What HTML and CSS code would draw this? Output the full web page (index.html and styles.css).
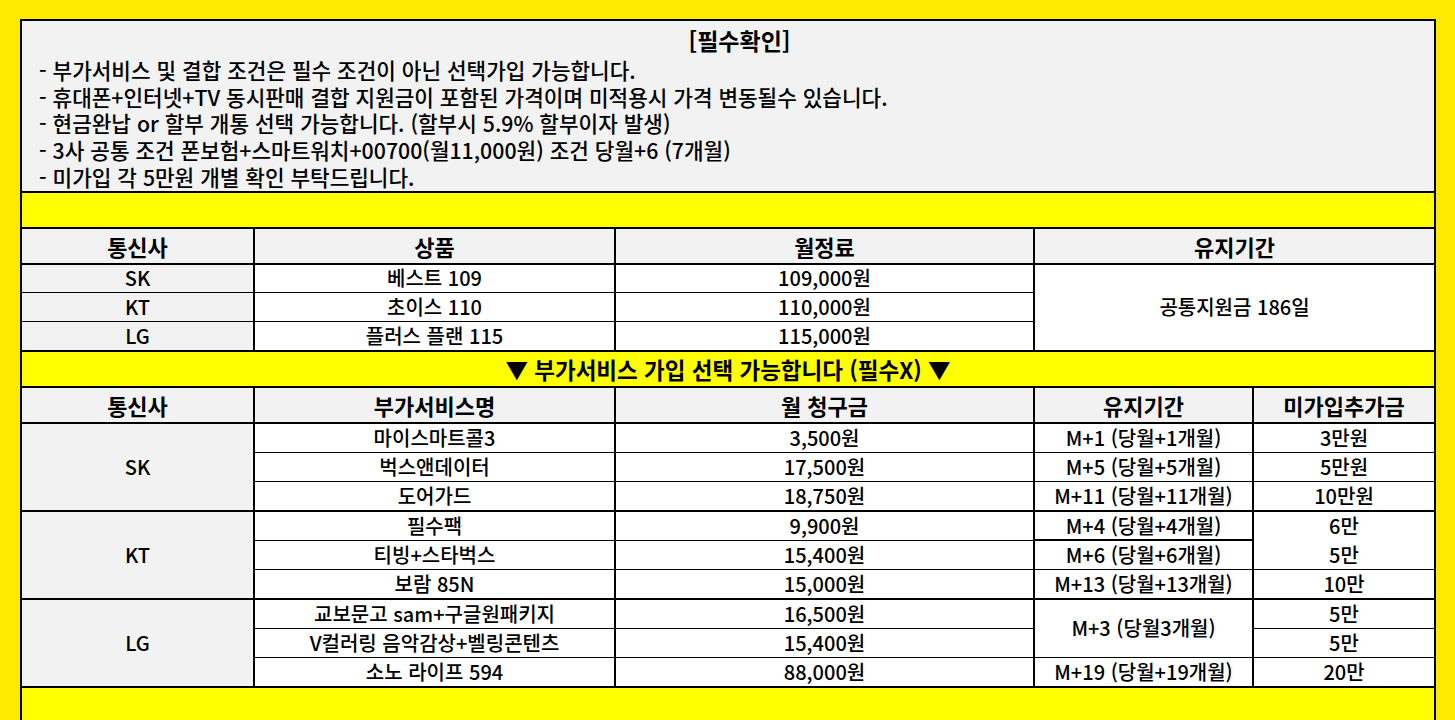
FILE: index.html
```html
<!DOCTYPE html>
<html lang="ko">
<head>
<meta charset="utf-8">
<title>요금 안내</title>
<link rel="stylesheet" href="styles.css">
</head>
<body>
<table class="sheet">
  <colgroup>
    <col class="c1"><col class="c2"><col class="c3"><col class="c4"><col class="c5">
  </colgroup>
  <tbody>
    <tr class="notice-row">
      <td colspan="5" class="notice">
        <div class="notice-title">[필수확인]</div>
        <div class="notice-line">- 부가서비스 및 결합 조건은 필수 조건이 아닌 선택가입 가능합니다.</div>
        <div class="notice-line">- 휴대폰+인터넷+TV 동시판매 결합 지원금이 포함된 가격이며 미적용시 가격 변동될수 있습니다.</div>
        <div class="notice-line">- 현금완납 or 할부 개통 선택 가능합니다. (할부시 5.9% 할부이자 발생)</div>
        <div class="notice-line">- 3사 공통 조건 폰보험+스마트워치+00700(월11,000원) 조건 당월+6 (7개월)</div>
        <div class="notice-line">- 미가입 각 5만원 개별 확인 부탁드립니다.</div>
      </td>
    </tr>
    <tr class="band">
      <td colspan="5" class="yellow"></td>
    </tr>
    <tr class="head">
      <th>통신사</th>
      <th>상품</th>
      <th>월정료</th>
      <th colspan="2">유지기간</th>
    </tr>
    <tr class="row">
      <td class="gray">SK</td>
      <td>베스트 109</td>
      <td>109,000원</td>
      <td colspan="2" rowspan="3" class="gend">공통지원금 186일</td>
    </tr>
    <tr class="row">
      <td class="gray">KT</td>
      <td>초이스 110</td>
      <td>110,000원</td>
    </tr>
    <tr class="row gend">
      <td class="gray">LG</td>
      <td>플러스 플랜 115</td>
      <td>115,000원</td>
    </tr>
    <tr class="band">
      <td colspan="5" class="yellow banner">▼ 부가서비스 가입 선택 가능합니다 (필수X) ▼</td>
    </tr>
    <tr class="head">
      <th>통신사</th>
      <th>부가서비스명</th>
      <th>월 청구금</th>
      <th>유지기간</th>
      <th>미가입추가금</th>
    </tr>
    <tr class="row">
      <td class="gray gend" rowspan="3">SK</td>
      <td>마이스마트콜3</td>
      <td>3,500원</td>
      <td>M+1 (당월+1개월)</td>
      <td>3만원</td>
    </tr>
    <tr class="row">
      <td>벅스앤데이터</td>
      <td>17,500원</td>
      <td>M+5 (당월+5개월)</td>
      <td>5만원</td>
    </tr>
    <tr class="row gend">
      <td>도어가드</td>
      <td>18,750원</td>
      <td>M+11 (당월+11개월)</td>
      <td>10만원</td>
    </tr>
    <tr class="row">
      <td class="gray gend" rowspan="3">KT</td>
      <td>필수팩</td>
      <td>9,900원</td>
      <td class="thick-under">M+4 (당월+4개월)</td>
      <td class="open-under">6만</td>
    </tr>
    <tr class="row">
      <td>티빙+스타벅스</td>
      <td>15,400원</td>
      <td>M+6 (당월+6개월)</td>
      <td>5만</td>
    </tr>
    <tr class="row gend">
      <td>보람 85N</td>
      <td>15,000원</td>
      <td>M+13 (당월+13개월)</td>
      <td>10만</td>
    </tr>
    <tr class="row">
      <td class="gray gend" rowspan="3">LG</td>
      <td>교보문고 sam+구글원패키지</td>
      <td>16,500원</td>
      <td rowspan="2">M+3 (당월3개월)</td>
      <td>5만</td>
    </tr>
    <tr class="row">
      <td>V컬러링 음악감상+벨링콘텐츠</td>
      <td>15,400원</td>
      <td>5만</td>
    </tr>
    <tr class="row gend">
      <td>소노 라이프 594</td>
      <td>88,000원</td>
      <td>M+19 (당월+19개월)</td>
      <td>20만</td>
    </tr>
    <tr class="band last">
      <td colspan="5" class="yellow"></td>
    </tr>
  </tbody>
</table>
</body>
</html>
```
FILE: styles.css
```css
html, body {
  margin: 0;
  padding: 0;
}
body {
  background: #ffe900;
  padding: 19px 0 0 20px;
  font-family: "Noto Sans CJK KR", "Noto Sans", sans-serif;
  color: #000;
  height: 720px;
  box-sizing: border-box;
  overflow: hidden;
}
.sheet {
  border-collapse: collapse;
  table-layout: fixed;
  width: 1414px;
  border: 2px solid #000;
}
.c1 { width: 233px; }
.c2 { width: 361px; }
.c3 { width: 419px; }
.c4 { width: 219px; }
.c5 { width: 182px; }

.sheet td, .sheet th {
  padding: 0;
  text-align: center;
  vertical-align: middle;
  border-left: 2px solid #000;
  border-right: 2px solid #000;
  border-top: 1px solid #000;
  border-bottom: 1px solid #000;
  background: #fff;
  font-size: 20px;
  font-weight: 500;
  line-height: 24px;
  white-space: nowrap;
  overflow: visible;
}
.sheet th {
  background: #f2f2f2;
  font-weight: 700;
  font-size: 22px;
  border-top: 2px solid #000;
  border-bottom: 2px solid #000;
}
.sheet td.gray { background: #f2f2f2; }

.notice-row td.notice {
  background: #f2f2f2;
  text-align: left;
  vertical-align: top;
  height: 170px;
  padding: 5px 0 0 17px;
  box-sizing: border-box;
  border: 2px solid #000;
  font-size: 21.3px;
}
.notice-title {
  text-align: center;
  font-weight: 700;
  font-size: 23px;
  line-height: 28px;
  margin-bottom: 3px;
  padding-left: 6px;
}
.notice-line {
  line-height: 26.7px;
}

.band td.yellow {
  background: #ffff00;
  height: 34px;
  border-top: 2px solid #000;
  border-bottom: 2px solid #000;
}
.band.last td.yellow { height: 33px; }
.sheet td.banner { font-weight: 700; font-size: 22.5px; }
.head th { height: 34px; }
.row td { height: 27.85px; }
.sheet tr.gend td, .sheet td.gend { border-bottom: 2px solid #000; }
.sheet td.thick-under { border-bottom: 2px solid #000; }
.sheet td.open-under { border-bottom-style: hidden; }
```
